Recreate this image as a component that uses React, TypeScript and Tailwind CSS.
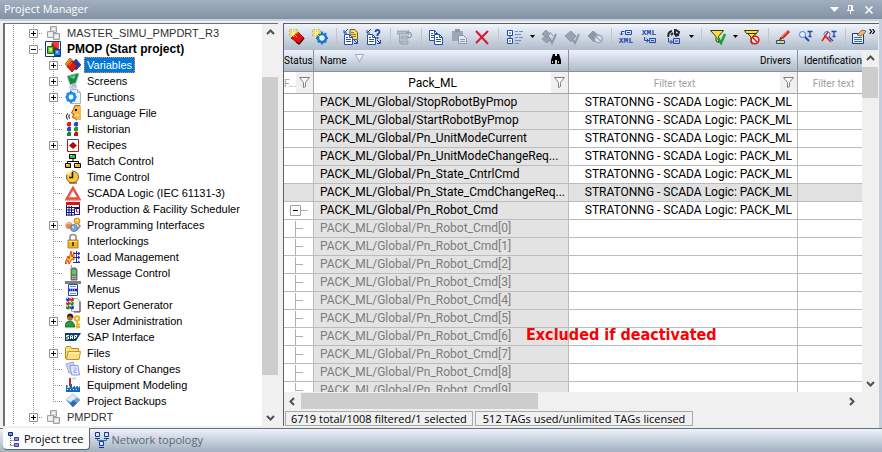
import type { ReactNode } from 'react';

/* ---------- icon helpers ---------- */

function Icon({ children, size = 16 }: { children: ReactNode; size?: number }) {
  return (
    <svg width={size} height={size} viewBox={`0 0 ${size} ${size}`} className="block shrink-0" aria-hidden="true">
      {children}
    </svg>
  );
}

function Spark() {
  return (
    <g>
      <path d="M0 4h9M4.500 0v8M1 1l7 7M8 1L1 8" stroke="#ffd800" strokeWidth="1" />
      <path d="M2 0v1M7 0v1M0 2h1M0 6h1M9 2h-1" stroke="#c87800" />
      <path d="M3 3h3v3H3z" fill="#fff27a" />
    </g>
  );
}

function Sheet({ x, y, c = '#2450b4', fill = '#fff' }: { x: number; y: number; c?: string; fill?: string }) {
  return (
    <g transform={`translate(${x} ${y})`}>
      <path d="M.5.5h5l3 3v7h-8z" fill={fill} stroke={c} />
      <path d="M5.500.5v3h3M2 3.500h2M2 5.500h5M2 7.500h5" fill="none" stroke={c} />
    </g>
  );
}

function Cubes({ color }: { color?: boolean }) {
  return color ? (
    <Icon>
      <path d="M.5.5h15v15H.5z" fill="#fff" stroke="#0a3a8c" />
      <path d="M7 2h6v6H7z" fill="#d01818" stroke="#7a0a0a" />
      <path d="M7 2l1-1h6v6l-1 1" fill="#f04040" />
      <path d="M2.500 5.500h6v7h-6z" fill="#5ac81e" stroke="#1c5c0a" />
      <path d="M4 7h3v3H4z" fill="#b4f08c" />
      <path d="M9.500 8.500h6v6h-6z" fill="#2a86d8" stroke="#0a3a8c" />
      <path d="M11 10h2v2h-2z" fill="#8cc8f8" />
    </Icon>
  ) : (
    <Icon>
      <path d="M5.500 1.500h6v6h-6z" fill="#d8d8d8" stroke="#a0a0a0" />
      <path d="M2.500 6.500h6v6h-6z" fill="#e4e4e4" stroke="#a0a0a0" />
      <path d="M8.500 8.500h6v6h-6z" fill="#dcdcdc" stroke="#a0a0a0" />
      <path d="M4 8h3v3H4zM10 10h3v3h-3zM7 3h3v2H7z" fill="#f4f4f4" />
    </Icon>
  );
}

const balls = (dx: number, s: number, list: string[]) =>
  list.map((c, i) => (
    <g key={i}>
      <circle cx={dx + (i % 2) * s + 2} cy={Math.floor(i / 2) * s + 2.5} r="2" fill={c} />
      <path d={`M${dx + (i % 2) * s + 1} ${Math.floor(i / 2) * s + 1.5}h1`} stroke="#fff" opacity=".7" />
    </g>
  ));

const treeIcons: Record<string, ReactNode> = {
  variables: (
    <Icon>
      <path d="M5 1l6 5-5 6-6-5z" fill="#e88a18" stroke="#8c4a08" strokeWidth=".6" />
      <path d="M11 2l5 6-5 5-4-6z" fill="#1a3cb4" stroke="#0a1c6c" strokeWidth=".6" />
      <path d="M7 4l5 5.500L7 15 2 9.500z" fill="#dc1c10" stroke="#8c0a04" strokeWidth=".8" />
      <path d="M7 5l-3.500 4" stroke="#ff7a60" />
    </Icon>
  ),
  screens: (
    <Icon>
      <path d="M8 10l3 1 1 3-4 2-4-2 2-1z" fill="#a8bccc" />
      <path d="M2 3l11-3 1 1-3 9-6 2z" fill="#128c3c" stroke="#b8c8d4" />
      <path d="M4 4l7-2-2 4z" fill="#58d884" />
      <path d="M4 14.500h8" stroke="#c4d4e4" strokeWidth="2" />
    </Icon>
  ),
  functions: (
    <Icon>
      <path d="M5.500.5h7l3 3v11h-10z" fill="#eef0fa" stroke="#a8b0d0" />
      <circle cx="6" cy="8" r="3.800" fill="#fff" stroke="#1c8ce8" strokeWidth="2.800" />
      <path d="M6 2v2M6 12v2M.5 8h2M10 8h1.500M2 4l1.500 1.500M10 4L9 5.500M2 12l1.500-1.500M10 12l-1.500-1.500" stroke="#1c8ce8" strokeWidth="2" />
      <path d="M12.500.5v3h3" fill="none" stroke="#a8b0d0" />
    </Icon>
  ),
  language: (
    <Icon>
      <path d="M9 1l6-1 1 1v14h-5l-1-2H7l1-3-2-2 2-3z" fill="#f8b84c" />
      <path d="M15 .5H10L8.500 4 6.500 8l2 1-1 3.500 3 1 1 2" fill="none" stroke="#a8640c" />
      <path d="M10 4h2v2h-2z" fill="#000" />
      <path d="M10 10h4" stroke="#fff0a0" />
      <path d="M4.500 9.500Q3 11.500 4.500 13.500M2.500 8.500Q0 11.500 2.500 14.500" fill="none" stroke="#000" />
    </Icon>
  ),
  historian: (
    <Icon>
      <path d="M4 1v14M11 1v14" stroke="#404040" />
      {[['#e02020', '#2848d8'], ['#2848d8', '#20a020'], ['#188c18', '#c01818']].map(([a, b], i) => (
        <g key={i}>
          <path d={`M2 ${i * 5 + 1}h4v4h-4z`} fill={a} />
          <path d={`M9 ${i * 5 + 1}h4v4h-4z`} fill={b} />
          <path d={`M2 ${i * 5 + 1.5}h1M9 ${i * 5 + 1.5}h1`} stroke="#fff" opacity=".7" />
        </g>
      ))}
    </Icon>
  ),
  recipes: (
    <Icon>
      <path d="M2.500 2.500h11v12h-11z" fill="#fff" stroke="#b81818" />
      <path d="M2.500 2.500h11" stroke="#3050a0" />
      <path d="M8 5l4 3.500L8 12 4 8.500z" fill="#b00808" />
    </Icon>
  ),
  batch: (
    <Icon>
      <path d="M8 6v3M2.500 11V8.500h11V11" fill="none" stroke="#000" />
      <path d="M4.500 1.500h6v4h-6z" fill="#48b818" stroke="#000" />
      <path d="M.5 10.500h5v4h-5zM9.500 10.500h6v4h-6z" fill="#f8a818" stroke="#000" />
      <path d="M5 2h2v1H5zM1 11h2v1H1zM10 11h2v1h-2z" fill="#fff4a0" />
    </Icon>
  ),
  time: (
    <Icon>
      <circle cx="7.500" cy="8" r="6" fill="#f8c840" stroke="#8c5a10" />
      <path d="M3 6a5 5 0 014-4" fill="none" stroke="#fff4b0" strokeWidth="2" />
      <path d="M7.500 3v5.500H4" fill="none" stroke="#1c1c1c" strokeWidth="1.5" />
      <path d="M4 14h8" stroke="#5c3a08" />
    </Icon>
  ),
  scada: (
    <Icon>
      <path d="M8 3l6 10.500H2z" fill="none" stroke="#ec5040" strokeWidth="2.500" />
      <path d="M8 5.500L4 12" fill="none" stroke="#f8a090" strokeWidth="1" />
      <path d="M0 15h16" stroke="#ec5040" />
    </Icon>
  ),
  scheduler: (
    <Icon>
      <path d="M1 1h14v13H1z" fill="#fff" />
      <path d="M1 2.500h14" stroke="#e01010" strokeWidth="3" />
      <path d="M1 6.500h14M1 9h8M1 11.500h8M1 14h9M1.500 4v11M4 5v10M6.500 5v10M14.500 4v10" stroke="#101880" />
      <path d="M9.500 7.500h5v6h-5z" fill="#fff" stroke="#101880" />
      <path d="M11.500 8v3h2" fill="none" stroke="#e01010" />
    </Icon>
  ),
  programming: (
    <Icon>
      <circle cx="12" cy="4" r="3" fill="#f8c040" stroke="#b87810" strokeWidth=".8" />
      <circle cx="4" cy="8.500" r="3.500" fill="#e8884c" />
      <path d="M1 7q2-2 5 0" fill="none" stroke="#ffc8a0" />
      <circle cx="9" cy="11" r="3.500" fill="#78acd0" stroke="#3c6c98" strokeWidth=".8" />
      <path d="M13 7l2 2-3 4" fill="none" stroke="#888" strokeWidth="1.500" />
      <circle cx="12.500" cy="3" r="1" fill="#fff4b0" />
      <circle cx="8" cy="10" r="1" fill="#d8ecf8" />
    </Icon>
  ),
  locks: (
    <Icon>
      <path d="M5 8V4q0-2.500 3-2.500T11 4v4" fill="none" stroke="#909090" strokeWidth="1.600" />
      <path d="M3 7h10v8H3z" fill="#f0b820" stroke="#a87008" strokeWidth=".8" />
      <path d="M4 8.500h8" stroke="#fff09c" />
      <path d="M7 9h2v4H7z" fill="#5c3a00" />
    </Icon>
  ),
  load: (
    <Icon>
      <path d="M0 14l3-7 1 3 2-8 1 6 2-5v8L7 10l-3 5-1-4-2 4z" fill="#f8e020" stroke="#e01818" strokeWidth=".8" />
      <path d="M11.500 2v12M9 4.500h6M8 8.500h7M8 13.500h7M13 3l2 1.500L13 6M13 7l2 1.500-2 1.500M13 12l2 1.500" fill="none" stroke="#2828a0" />
    </Icon>
  ),
  message: (
    <Icon>
      <path d="M6 3h5l1 2v10H6z" fill="#7c8078" stroke="#585c54" strokeWidth=".8" />
      <path d="M6.500 0v4" stroke="#a0a0a0" />
      <path d="M7 5h4v4H7z" fill="#48d848" />
      <path d="M7 11.500h4M7 13.500h4" stroke="#c0c4bc" strokeDasharray="1 .5" />
    </Icon>
  ),
  menus: (
    <Icon>
      <path d="M0 1.500h16" stroke="#808080" strokeWidth="3" />
      <path d="M3.500 3.500h9v11h-9z" fill="#fff" stroke="#1c4ca8" />
      <path d="M5 5.500h6M5 12.500h6" stroke="#6c8cd0" />
      <path d="M4 9h8" stroke="#1010e0" strokeWidth="2.500" />
      <path d="M5 9h6" stroke="#fff" strokeDasharray="1 1" />
    </Icon>
  ),
  report: (
    <Icon>
      <path d="M6.500 1.500h6l2.500 3v10H6.500z" fill="#f4f4f4" stroke="#b0b0b0" />
      <path d="M15 4.500v10.500H9" fill="none" stroke="#404040" />
      {balls(1, 4, ['#2038c8', '#e02020', '#e02020', '#20a020', '#189018', '#2038c8'])}
    </Icon>
  ),
  users: (
    <Icon>
      <circle cx="5" cy="4.500" r="3" fill="#b06a40" />
      <path d="M2 4q0-3.500 3-3.500T8.500 4L8 5 5 3z" fill="#3c2010" />
      <path d="M0 14q0-6 5-6 4 0 5 6z" fill="#289c38" stroke="#105820" strokeWidth=".8" />
      <circle cx="12" cy="5.500" r="2.200" fill="none" stroke="#f0b020" strokeWidth="2" />
      <path d="M12 8v7.500M12 11.500h3M12 14h3" stroke="#f0b020" strokeWidth="1.800" />
    </Icon>
  ),
  sap: (
    <Icon>
      <path d="M0 4h16l-5 8H0z" fill="#0a3c78" />
      <path d="M4 6.500H1.500v1.500h2v2H1M5.500 10V7l1-1 1 1v3M5.500 8.500h2M9.500 10V6.500H12L11 8.500H9.500" fill="none" stroke="#fff" />
    </Icon>
  ),
  files: (
    <Icon>
      <path d="M.5 3.500l1-2h4l1 2h7v10H.5z" fill="#f8e088" stroke="#b88818" />
      <path d="M3 6.500h12.500l-1.500 8H1.500z" fill="#fbe08c" stroke="#c89018" />
      <path d="M4 8h10" stroke="#fff8c8" />
    </Icon>
  ),
  history: (
    <Icon>
      <path d="M1 3l7-2 3 9-7 2z" fill="#d0d4f8" stroke="#9ca4e0" />
      <path d="M5 4.500h8l1.500 9.500h-8z" fill="#e4e8ff" stroke="#8c98e0" />
      <path d="M8 7h3v2.500H9v2h3" fill="none" stroke="#a0aae8" />
    </Icon>
  ),
  equipment: (
    <Icon>
      <path d="M1 15V8h1.500v3h2V7H7v4l2-2h1v2l2-2h1v2l2-2v6z" fill="#1868b8" />
      <path d="M4 1h2v8H4z" fill="#d02828" />
      <path d="M2 12.500h12" stroke="#fff" strokeDasharray="1 2" />
      <path d="M7 1.500h2M10 0v3" stroke="#c0c0c0" />
    </Icon>
  ),
  backups: (
    <Icon>
      <path d="M8 1l7 6-7 7-7-7z" fill="#6ca0d4" stroke="#88a8c8" />
      <path d="M8 1l4 3.500L6 9 1 7z" fill="#dcecf8" />
      <path d="M8 7l4 3-4 4-3-3z" fill="#2c6cb0" />
    </Icon>
  ),
};

/* ---------- project tree ---------- */

type Expand = 'open' | 'closed' | null;

function Guide({ half, branch, box }: { half?: boolean; branch?: boolean; box?: Expand }) {
  return (
    <svg width="20" height="16" viewBox="0 0 20 16" className="block shrink-0" aria-hidden="true">
      <path d={half ? 'M10.5 0v9' : 'M10.5 0v16'} stroke="#909090" strokeDasharray="1 1" />
      {branch && <path d="M10 8.500h10" stroke="#909090" strokeDasharray="1 1" />}
      {box && (
        <>
          <path d="M6.500 4.500h8v8h-8z" fill="#fff" stroke="#919191" />
          <path d={box === 'open' ? 'M8 8.500h5' : 'M8 8.500h5M10.500 6v5'} stroke="#000" />
        </>
      )}
    </svg>
  );
}

const treeItems: [string, string, Expand][] = [
  ['Variables', 'variables', 'closed'],
  ['Screens', 'screens', 'closed'],
  ['Functions', 'functions', 'closed'],
  ['Language File', 'language', null],
  ['Historian', 'historian', null],
  ['Recipes', 'recipes', 'closed'],
  ['Batch Control', 'batch', null],
  ['Time Control', 'time', null],
  ['SCADA Logic (IEC 61131-3)', 'scada', null],
  ['Production & Facility Scheduler', 'scheduler', null],
  ['Programming Interfaces', 'programming', 'closed'],
  ['Interlockings', 'locks', null],
  ['Load Management', 'load', null],
  ['Message Control', 'message', null],
  ['Menus', 'menus', null],
  ['Report Generator', 'report', null],
  ['User Administration', 'users', 'closed'],
  ['SAP Interface', 'sap', null],
  ['Files', 'files', 'closed'],
  ['History of Changes', 'history', null],
  ['Equipment Modeling', 'equipment', null],
  ['Project Backups', 'backups', null],
];

function ProjectRow({ label, box, active }: { label: string; box: Expand; active?: boolean }) {
  return (
    <li className="flex h-4 items-center">
      <Guide />
      <Guide branch box={box} />
      <span className="ml-0.5">
        <Cubes color={active} />
      </span>
      <span className={active ? 'pl-1.5 text-xs leading-4 font-bold' : 'pl-1.5 text-[#303030]'}>{label}</span>
    </li>
  );
}

function Tree() {
  return (
    <ul className="-ml-0.5 min-w-0 flex-1 overflow-hidden pt-px font-['Liberation_Sans',Arial,sans-serif] text-[11px] leading-4 whitespace-nowrap">
      <ProjectRow label="MASTER_SIMU_PMPDRT_R3" box="closed" />
      <ProjectRow label="PMOP (Start project)" box="open" active />
      {treeItems.map(([label, icon, box], i) => (
        <li key={label} className="flex h-4 items-center">
          <Guide />
          <Guide />
          <Guide branch box={box} half={i === treeItems.length - 1} />
          <span className="ml-0.5">{treeIcons[icon]}</span>
          <span
            className={
              i === 0
                ? 'ml-[3px] bg-[#0078d7] px-[3px] text-white outline-1 -outline-offset-1 outline-[#ff8728] outline-dotted'
                : 'ml-[3px] px-[3px]'
            }
          >
            {label}
          </span>
        </li>
      ))}
      <ProjectRow label="PMPDRT" box="closed" />
    </ul>
  );
}

/* ---------- scroll bars ---------- */

function Chevron({ d }: { d: string }) {
  return (
    <svg width="9" height="9" viewBox="0 0 9 9" aria-hidden="true">
      <path d={d} fill="none" stroke="#505050" strokeWidth="2" />
    </svg>
  );
}

function VScroll({ children }: { children: ReactNode }) {
  return (
    <div className="flex w-4 shrink-0 flex-col bg-[#f0f0f0]">
      <button aria-label="Scroll up" className="flex h-[17px] shrink-0 items-center justify-center">
        <Chevron d="M1 6l3.500-3.500L8 6" />
      </button>
      {children}
      <button aria-label="Scroll down" className="flex h-[17px] shrink-0 items-center justify-center">
        <Chevron d="M1 3l3.500 3.500L8 3" />
      </button>
    </div>
  );
}

/* ---------- toolbar ---------- */

function Sep() {
  return <span className="mr-0.5 ml-[5px] h-[18px] w-px shrink-0 bg-[#c4c4c4]" />;
}

function Tool({ label, menu, children }: { label: string; menu?: boolean; children: ReactNode }) {
  return (
    <button
      aria-label={label}
      className={menu ? 'flex w-9 shrink-0 items-center justify-between pr-px pl-1.5' : 'flex w-[23px] shrink-0 items-center justify-center'}
    >
      <Icon>{children}</Icon>
      {menu && (
        <svg width="7" height="4" viewBox="0 0 7 4" aria-hidden="true">
          <path d="M1 0h5L3.500 3z" />
        </svg>
      )}
    </button>
  );
}

const NAVY = '#1c48b0';
const GREY = '#8c98a8';

function XmlText({ y }: { y: number }) {
  return (
    <text x="8" y={y} textAnchor="middle" fontSize="8" fontWeight="700" fill={NAVY} fontFamily="Liberation Mono, monospace">
      XML
    </text>
  );
}

function Toolbar() {
  return (
    <div className="flex h-[26px] shrink-0 items-center overflow-hidden bg-linear-to-b from-[#f0f5fd] to-[#b0bccb] pl-px">
      <Tool label="New variable">
        <path d="M9 3l6 6-5 6-8-6z" fill="#e81010" stroke="#8c0404" strokeWidth=".8" />
        <path d="M15 9l-5 6-3-2" fill="none" stroke="#5c0404" strokeWidth="1.500" />
        <Spark />
      </Tool>
      <Tool label="New structure">
        <circle cx="10" cy="9" r="4" fill="#e8f4ff" stroke="#1878d0" strokeWidth="2.600" />
        <path d="M10 2.500v2M10 13.500v2M4 9h1M14.500 9h1.500M14 4l-1 1.500M6 13.500L7 12M14 13.500L13 12" stroke="#1878d0" strokeWidth="2" />
        <Spark />
      </Tool>
      <Sep />
      <Tool label="Edit rows">
        <path d="M7 .5h5l2.500 3v7H7z" fill="#f8d860" stroke="#6c6430" />
        <path d="M8 3.500h3M8 5.500h5M8 7.500h5" stroke="#8c8040" />
        <Sheet x={1} y={5} />
        <path d="M5 0L1 4M1 1v3h3M11 11l3 3M11 14.500h3.500V11" fill="none" stroke={NAVY} />
      </Tool>
      <Tool label="Linked elements">
        <Sheet x={1} y={5} />
        <path d="M5 0L1 4M1 1v3h3M11 11l3 3M11 14.500h3.500V11" fill="none" stroke={NAVY} />
        <path d="M9.500 3q0-2 2-2t2 2q0 1-2 2.500V7M11.500 8v2" fill="none" stroke={NAVY} strokeWidth="1.800" />
      </Tool>
      <Sep />
      <Tool label="Replace">
        <path d="M0 2h10v3H0zM4 7h7v3H4zM4 12h7v3H4zM2.500 5v9H4" fill="#b4bcc8" stroke={GREY} strokeWidth=".7" />
        <path d="M10 3.500h3q3 2.500 0 5h-2M12 1.500L10 3.500l2 2" fill="none" stroke={GREY} strokeWidth="1.200" />
      </Tool>
      <Sep />
      <Tool label="Copy">
        <Sheet x={1} y={1} />
        <Sheet x={6} y={5} />
      </Tool>
      <Tool label="Paste">
        <path d="M1 2h11v10H1z" fill="#9ca8b8" />
        <path d="M4 0h5v3H4z" fill={GREY} />
        <path d="M7.500 6.500h5l3 3v5h-8z" fill="#e4e8ee" stroke={GREY} />
        <path d="M9 10.500h5M9 12.500h5" stroke={GREY} />
      </Tool>
      <Tool label="Delete">
        <path d="M2 2l12 13M14 2L2 14" stroke="#d81830" strokeWidth="2" />
      </Tool>
      <Sep />
      <Tool label="Extended view" menu>
        <path d="M.5 1.500h5v5h-5zM.5 9.500h5v5h-5zM2 4h2M2 12h2M3 6.500v3" fill="#fff" stroke={NAVY} />
        <path d="M8 2.500h3M12 2.500h4M8 5.500h6M8 8.500h3M12 8.500h4M8 11.500h6M8 14.500h4" stroke="#6c8cd0" />
      </Tool>
      <Tool label="Activate">
        <path d="M5 1l4 4-4 4-4-4zM6 6l4 4-4 4-5-4zM9 3l3 4" fill="#98a4b4" stroke={GREY} />
        <path d="M9 10l2 4 4-9" fill="none" stroke={GREY} strokeWidth="2" />
      </Tool>
      <Tool label="Activate all">
        <path d="M7 2l5 5-5 6-6-6z" fill="#98a4b4" stroke={GREY} />
        <path d="M8 10l3 4 4-9" fill="none" stroke={GREY} strokeWidth="2" />
      </Tool>
      <Tool label="Deactivate">
        <path d="M6 2l6 5-5 6-6-6z" fill={GREY} stroke={GREY} />
        <circle cx="11.500" cy="10" r="3.800" fill="#e0e5ec" stroke="#a0aaba" strokeWidth="1.500" />
        <path d="M9 7.500l5 5" stroke="#a0aaba" strokeWidth="1.500" />
      </Tool>
      <Sep />
      <Tool label="Export selected as XML">
        <path d="M7.500 1.500h6v4h-6zM9 3.500h3M3.500 6V2.500h3M2 4.500L3.500 6 5 4.500" fill="none" stroke={NAVY} />
        <XmlText y={14} />
      </Tool>
      <Tool label="Import XML">
        <path d="M8.500 9.500h6v4h-6zM10 11.500h3M3.500 8v3.500h4M5.500 9.500l2 2-2 2" fill="none" stroke={NAVY} />
        <XmlText y={6} />
      </Tool>
      <Tool label="Import" menu>
        <path d="M2.500 8q-1-5 3.500-6M9 .5l4 2.500-1 3-3-1z" fill="none" stroke="#202830" strokeWidth="2" />
        <path d="M5 6l2-2M9 7l3-1" stroke="#202830" strokeWidth="2" />
        <path d="M7.500 9.500h6v5h-6zM9 12h3M2.500 9v4h4M4.500 11l2 2-2 2" fill="none" stroke={NAVY} />
      </Tool>
      <Sep />
      <Tool label="Filter" menu>
        <path d="M.5 1.500h13l-5 6v6L6 12V7.500z" fill="#f8e040" stroke="#403808" />
        <path d="M8 9l3 5 4-9" fill="none" stroke="#18a030" strokeWidth="2.500" />
      </Tool>
      <Tool label="Remove all filters">
        <path d="M.5 1.500h14l-2 3h-10zM4 5l3 3v6l2 1V7l4-3" fill="#f8e040" stroke="#403808" />
        <circle cx="11" cy="11" r="3.800" fill="#fff" stroke="#e01818" strokeWidth="1.600" />
        <path d="M8.500 8.500l5 5" stroke="#e01818" strokeWidth="1.600" />
      </Tool>
      <Sep />
      <Tool label="Edit selected cell">
        <path d="M7 9L14 2" stroke="#d02818" strokeWidth="3" />
        <path d="M7 8l6-6" stroke="#ff8060" />
        <path d="M4 11l1.500-3 2 2z" fill="#402010" />
        <path d="M1.500 11.500h8v3h-8z" fill="#f8d828" stroke={NAVY} />
      </Tool>
      <Tool label="Replace text in selected column">
        <circle cx="4.500" cy="5.500" r="3" fill="#e4f2ff" stroke="#4878c8" />
        <path d="M7 8l4 4" stroke={NAVY} strokeWidth="2" />
        <path d="M9.500 2.500h5M12 2.500v5M10.500 7.500h3" stroke={NAVY} strokeWidth="1.300" />
      </Tool>
      <Tool label="Find text">
        <circle cx="6" cy="5.500" r="3" fill="#e4f2ff" stroke="#4878c8" />
        <path d="M1 12L7 3M4 7l6 6" stroke="#d82020" strokeWidth="1.500" />
        <path d="M8 8l4 4" stroke={NAVY} strokeWidth="1.500" />
        <path d="M10.500 2.500h5M13 2.500v5M11.500 7.500h3" stroke={NAVY} strokeWidth="1.300" />
      </Tool>
      <Sep />
      <Tool label="Properties">
        <path d="M.5 4.500h11v10H.5z" fill="#e8f0fc" stroke="#183c8c" />
        <path d="M2 8.500h8M2 10.500h8M2 12.500h8" stroke="#4068b8" />
        <path d="M5 6l3-3 2-2 4 1-2 3-3 2z" fill="#f4b860" stroke="#6c4820" strokeWidth=".7" />
      </Tool>
      <button aria-label="More buttons" className="h-full min-w-1.5 flex-1">
        <svg width="7" height="5" viewBox="0 0 7 5" className="-mt-2 -ml-0.5" aria-hidden="true">
          <path d="M.5 0l2 2.500-2 2.500M3.500 0l2 2.500-2 2.500" fill="none" stroke="#000" strokeWidth="1.200" />
        </svg>
      </button>
    </div>
  );
}

/* ---------- variable list ---------- */

function Funnel({ label }: { label: string }) {
  return (
    <button aria-label={label} className="flex h-[21px] w-[17px] shrink-0 items-center justify-center bg-[#f0f0f0]">
      <svg width="11" height="11" viewBox="0 0 11 11" aria-hidden="true">
        <path d="M.5.5h10l-4 5v4l-2 1v-5z" fill="#fafafa" stroke="#808080" />
      </svg>
    </button>
  );
}

function FilterCell({ label, value, placeholder = 'Filter text' }: { label: string; value?: string; placeholder?: string }) {
  return (
    <td className="border-r border-b border-[#a8a8a8] p-0">
      <div className="flex h-[21px]">
        <input
          aria-label={label}
          defaultValue={value}
          placeholder={placeholder}
          className="w-0 min-w-0 flex-1 bg-white text-center text-xs outline-none placeholder:text-[10px] placeholder:text-[#a0a0a0]"
        />
        <Funnel label={`${label} options`} />
      </div>
    </td>
  );
}

type Row = { name: string; kind: 'plain' | 'parent' | 'child' | 'last'; selected?: boolean };

const rows: Row[] = [
  { name: 'StopRobotByPmop', kind: 'plain' },
  { name: 'StartRobotByPmop', kind: 'plain' },
  { name: 'Pn_UnitModeCurrent', kind: 'plain' },
  { name: 'Pn_UnitModeChangeReq...', kind: 'plain' },
  { name: 'Pn_State_CntrlCmd', kind: 'plain' },
  { name: 'Pn_State_CmdChangeReq...', kind: 'plain', selected: true },
  { name: 'Pn_Robot_Cmd', kind: 'parent' },
  ...Array.from({ length: 10 }, (_, i): Row => ({ name: `Pn_Robot_Cmd[${i}]`, kind: i === 9 ? 'last' : 'child' })),
];

const rowMarks = {
  parent: (
    <svg width="29" height="17" viewBox="0 0 29 17" className="block" aria-label="Collapse">
      <path d="M6.500 3.500h10v10h-10z" fill="#fff" stroke="#a0a0a0" />
      <path d="M9 8.500h5" stroke="#000" />
      <path d="M17 8.500h7" stroke="#b0b0b0" />
    </svg>
  ),
  child: (
    <svg width="29" height="17" viewBox="0 0 29 17" className="block" aria-hidden="true">
      <path d="M11.500 1v16M12 8.500h7" stroke="#b0b0b0" />
    </svg>
  ),
  last: (
    <svg width="29" height="17" viewBox="0 0 29 17" className="block" aria-hidden="true">
      <path d="M11.500 1v8M12 8.500h7" stroke="#b0b0b0" />
    </svg>
  ),
  plain: null,
};

const headCell = 'border-r border-b border-[#909090] py-0 align-middle font-normal';

function Grid() {
  return (
    <div className="relative min-w-0 flex-1 overflow-hidden bg-white font-[Roboto,'Open_Sans',sans-serif]">
      <table className="w-full min-w-[603px] table-fixed border-separate border-spacing-0 text-xs whitespace-nowrap">
        <colgroup>
          <col className="w-[30px]" />
          <col className="w-[255px]" />
          <col className="w-[229px]" />
          <col />
        </colgroup>
        <thead className="bg-linear-to-b from-[#ecf2fb] to-[#adb9c8] text-[10px]">
          <tr className="h-[22px] text-left">
            <th className={`${headCell} px-0`}>Status</th>
            <th className={`${headCell} px-1.5`}>
              <div className="flex items-center">
                Name
                <svg width="9" height="9" viewBox="0 0 9 9" className="mb-1 ml-2" aria-hidden="true">
                  <path d="M.5.5h8l-4 7z" fill="#eef2f8" stroke="#909aa8" strokeWidth=".8" />
                </svg>
                <svg width="10" height="10" viewBox="0 0 10 10" className="mr-px mb-1 ml-auto" aria-hidden="true">
                  <path d="M2 0h2v2h2V0h2l2 6v4H6V6H4v4H0V6z" />
                  <path d="M1.500 7v2M7.500 7v2" stroke="#fff" strokeWidth=".8" />
                </svg>
              </div>
            </th>
            <th className={`${headCell} px-1.5 text-right`}>Drivers</th>
            <th className={`${headCell} px-1.5`}>Identification</th>
          </tr>
        </thead>
        <tbody>
          <tr>
            <FilterCell label="Status filter" placeholder="F..." />
            <FilterCell label="Name filter" value="Pack_ML" />
            <FilterCell label="Drivers filter" />
            <FilterCell label="Identification filter" />
          </tr>
          {rows.map((r) => {
            const child = r.kind === 'child' || r.kind === 'last';
            const cell = 'h-[18px] border-r border-b border-[#bcbcbc] py-0 leading-[17px]';
            return (
              <tr key={r.name} className={r.selected ? 'bg-[#e1e1e1]' : ''}>
                <td className={`${cell} px-0`}>{rowMarks[r.kind]}</td>
                <td className={`${cell} bg-[#e3e3e3] px-1.5 ${child ? 'text-[#7c7c7c]' : ''}`}>PACK_ML/Global/{r.name}</td>
                <td className={`${cell} px-[5px] text-right`}>{child ? '' : 'STRATONNG - SCADA Logic: PACK_ML'}</td>
                <td className={cell} />
              </tr>
            );
          })}
        </tbody>
      </table>
      <p className="absolute top-[275px] left-[242px] font-['DejaVu_Sans_Condensed','DejaVu_Sans',sans-serif] text-base leading-5 font-bold whitespace-nowrap text-[#fa0000]">
        Excluded if deactivated
      </p>
    </div>
  );
}

export default function App() {
  return (
    <div className="flex h-screen flex-col bg-[#f0f0f0] font-['Open_Sans','Noto_Sans',sans-serif] text-[11px] text-black">
      <header className="flex h-[21px] shrink-0 items-center border-b-2 border-[#c6d1de] bg-linear-to-b from-[#a2afbf] to-[#8292a5] pr-[7px] pl-1 text-white">
        <h1 className="flex-1">Project Manager</h1>
        <button aria-label="Window position" className="flex w-4 justify-center">
          <svg width="9" height="5" viewBox="0 0 9 5" aria-hidden="true">
            <path d="M0 0h9L4.500 5z" fill="#fff" />
          </svg>
        </button>
        <button aria-label="Auto hide" className="flex w-[17px] justify-center">
          <svg width="9" height="9" viewBox="0 0 9 9" aria-hidden="true">
            <path d="M2.500 5V.5h4V5M5.500 1v4M1 5.500h7M4.500 6v3" fill="none" stroke="#fff" />
          </svg>
        </button>
        <button aria-label="Close" className="ml-1 flex w-3 justify-center">
          <svg width="8" height="8" viewBox="0 0 8 8" aria-hidden="true">
            <path d="M.5.5l7 7M7.500.5l-7 7" stroke="#fff" strokeWidth="1.500" />
          </svg>
        </button>
      </header>

      <main className="flex min-h-0 flex-1 border-r-[3px] border-[#c3cddb] pt-0.5 pb-0.5 pl-[3px]">
        <section className="flex w-[275px] shrink-0 border-t border-l-2 border-[#707070] bg-white">
          <Tree />
          <VScroll>
            <div className="flex min-h-0 flex-1 flex-col pt-9 pb-[34px]">
              <div className="flex-1 bg-[#cdcdcd]" />
            </div>
          </VScroll>
        </section>

        <section className="ml-[5px] flex min-w-0 flex-1 flex-col border-t border-l border-[#606060] bg-[#f0f0f0] pr-px">
          <Toolbar />
          <div className="flex min-h-0 flex-1">
            <Grid />
            <VScroll>
              <div className="flex min-h-0 flex-1 flex-col">
                <div className="h-[31px] bg-[#cdcdcd]" />
              </div>
            </VScroll>
          </div>
          <div className="mt-px mr-[18px] flex h-4 shrink-0">
            <button aria-label="Scroll left" className="flex w-[17px] items-center justify-center">
              <Chevron d="M6 1L2.500 4.500 6 8" />
            </button>
            <div className="flex-1">
              <div className="h-full w-[237px] bg-[#cdcdcd]" />
            </div>
            <button aria-label="Scroll right" className="flex w-[17px] items-center justify-center">
              <Chevron d="M3 1l3.500 3.500L3 8" />
            </button>
          </div>
          <footer className="flex h-[17px] shrink-0 items-center gap-0.5 pt-px pl-px leading-[13px] whitespace-nowrap">
            <span className="border border-[#a8a8a8] px-[5px]">6719 total/1008 filtered/1 selected</span>
            <span className="border border-[#a8a8a8] px-[7px]">512 TAGs used/unlimited TAGs licensed</span>
          </footer>
        </section>
      </main>

      <nav className="flex h-6 shrink-0 items-start border-t border-[#707070] bg-linear-to-b from-[#edf2fc] to-[#a3b0c0] pl-[3px]">
        <button className="-mt-px flex h-[22px] items-center rounded-b-sm border-r border-b border-[#606060] bg-[#fafbfd] pt-0.5 pr-[5px] pl-[5px]">
          <Icon>
            <path d="M2.500 4v9.500M2.500 8.500h3M2.500 13.500h3" fill="none" stroke="#606060" strokeDasharray="1 1" />
            <path d="M.5.5h4v3h-4z" fill="#58a0f0" stroke="#102880" />
            <path d="M6.500 5.500h4v3h-4zM6.500 11.500h4v3h-4z" fill="#9090e0" stroke="#4040a0" />
          </Icon>
          <span>Project tree</span>
        </button>
        <button className="-mt-px flex h-[22px] items-center gap-0.5 px-1 pt-0.5 text-[#606874]">
          <Icon>
            <path d="M3.500 6v2.500h9V6M8 8v2" fill="none" stroke="#208080" />
            <path d="M1.500.5h4v4h-4zM10.500.5h4v4h-4zM5.500 9.500h4v4h-4z" fill="#d8e8ff" stroke="#1830a0" />
            <path d="M1 6.500h5M10 6.500h5M5 15.500h5" stroke="#1830a0" />
          </Icon>
          <span>Network topology</span>
        </button>
      </nav>
    </div>
  );
}
